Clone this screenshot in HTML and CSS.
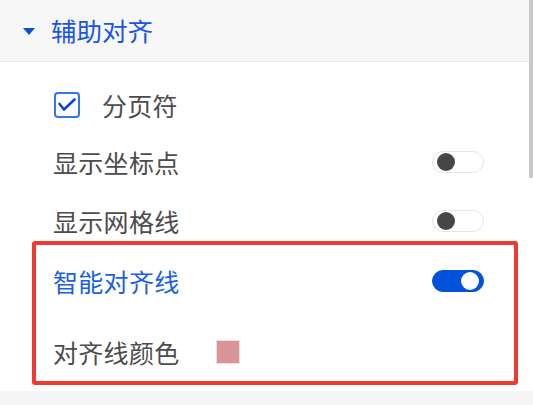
FILE: index.html
```html
<!DOCTYPE html>
<html lang="zh-CN">
<head>
<meta charset="utf-8">
<link rel="stylesheet" href="styles.css">
</head>
<body>
<div class="panel">
  <div class="header">
    <span class="caret"></span>
    <span class="title">辅助对齐</span>
  </div>
  <div class="content">
    <div class="row row-check">
      <span class="checkbox">
        <svg width="22" height="22" viewBox="0 0 22 22"><path d="M3.5 10 L8 15.5 L18.5 5.5" fill="none" stroke="#0a45d6" stroke-width="2.6" stroke-linecap="round" stroke-linejoin="round"/></svg>
      </span>
      <span class="label">分页符</span>
    </div>
    <div class="row row-2">
      <span class="label">显示坐标点</span>
      <span class="toggle"><span class="knob"></span></span>
    </div>
    <div class="row row-3">
      <span class="label">显示网格线</span>
      <span class="toggle"><span class="knob"></span></span>
    </div>
    <div class="highlight">
      <div class="row hl-row">
        <span class="label label-blue">智能对齐线</span>
        <span class="toggle on"><span class="knob"></span></span>
      </div>
      <div class="row hl-row hl-row2">
        <span class="label">对齐线颜色</span>
        <span class="swatch"></span>
      </div>
    </div>
  </div>
  <div class="footer"></div>
</div>
<div class="scrollbar"></div>
</body>
</html>
```
FILE: styles.css
```css
html, body {
  margin: 0;
  padding: 0;
}
body {
  width: 533px;
  height: 405px;
  overflow: hidden;
  background: #ffffff;
  position: relative;
  font-family: "Noto Sans CJK SC", "Noto Sans", sans-serif;
}
.panel {
  width: 533px;
  display: flex;
  flex-direction: column;
}
.header {
  width: 529px;
  height: 61px;
  background: #f7f7f7;
  border-bottom: 1px solid #e9e9e9;
  display: flex;
  align-items: center;
  padding-left: 23px;
  box-sizing: content-box;
}
.caret {
  width: 0;
  height: 0;
  border-left: 6.5px solid transparent;
  border-right: 6.5px solid transparent;
  border-top: 7px solid #0b4ed6;
  margin-right: 16px;
  margin-top: 1px;
}
.title {
  font-size: 25.5px;
  color: #1656e2;
  line-height: 30px;
  margin-top: -2px;
}
.content {
  width: 529px;
  box-sizing: border-box;
  padding: 23px 11px 0 32px;
  display: flex;
  flex-direction: column;
}
.row {
  height: 40px;
  display: flex;
  align-items: center;
  justify-content: space-between;
  padding: 0 34px 0 21px;
}
.row-check {
  justify-content: flex-start;
  padding-left: 22px;
}
.row-2 { margin-top: 17px; }
.row-3 { margin-top: 19px; }
.label {
  font-size: 25px;
  color: #4c4c4c;
  line-height: 40px;
  letter-spacing: 0.3px;
}
.label-blue { color: #1a5fe4; }
.checkbox {
  width: 26px;
  height: 26px;
  box-sizing: border-box;
  border: 2px solid #3575ea;
  border-radius: 4px;
  margin-right: 22px;
  display: flex;
  align-items: center;
  justify-content: center;
}
.toggle {
  width: 52px;
  height: 22px;
  box-sizing: border-box;
  border: 1px solid #e6e6e6;
  border-radius: 11px;
  background: #ffffff;
  display: flex;
  align-items: center;
  padding-left: 4px;
}
.knob {
  width: 18px;
  height: 18px;
  border-radius: 50%;
  background: #464646;
}
.toggle.on {
  background: #0052d9;
  border-color: #0052d9;
  justify-content: flex-end;
  padding-left: 0;
  padding-right: 4px;
}
.toggle.on .knob {
  background: #ffffff;
}
.highlight {
  width: 486px;
  height: 144px;
  box-sizing: border-box;
  border: 4px solid #ef3b2f;
  border-radius: 3px;
  padding-top: 16px;
  display: flex;
  flex-direction: column;
}
.hl-row {
  padding: 0 30px 0 17px;
}
.hl-row2 {
  margin-top: 31px;
  justify-content: flex-start;
}
.swatch {
  width: 24px;
  height: 24px;
  box-sizing: border-box;
  background: #d99595;
  border: 1px solid #e8e0e0;
  margin-left: 36px;
}
.footer {
  margin-top: 6px;
  height: 20px;
  background: #f5f5f5;
}
.scrollbar {
  position: absolute;
  top: 0;
  right: 0;
  width: 4px;
  height: 178px;
  background: #c8c8c8;
}
```
